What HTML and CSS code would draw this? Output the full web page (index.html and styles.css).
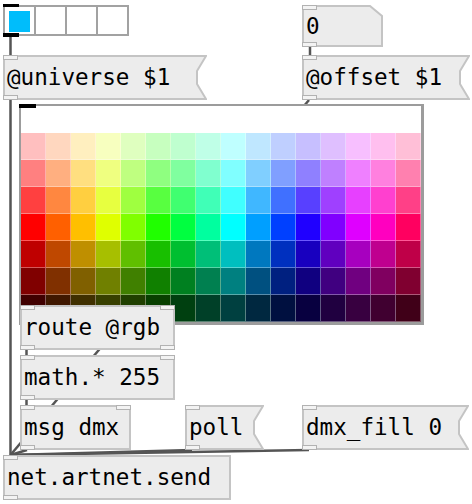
FILE: index.html
```html
<!DOCTYPE html>
<html>
<head>
<meta charset="utf-8">
<link rel="stylesheet" href="styles.css">
</head>
<body>
<div class="canvas">
  <svg class="cables" width="472" height="504" viewBox="0 0 472 504">
    <g stroke="#555" stroke-width="2.5" fill="none">
      <line x1="10.5" y1="36" x2="10.5" y2="55"/>
      <line x1="10.5" y1="100" x2="10.5" y2="455"/>
      <line x1="310" y1="47" x2="310" y2="55"/>
      <line x1="309" y1="100" x2="10.5" y2="455"/>
      <line x1="26.5" y1="350" x2="26.5" y2="355"/>
      <line x1="26.5" y1="400" x2="26.5" y2="405"/>
      <line x1="27" y1="450" x2="10.5" y2="455"/>
      <line x1="192" y1="450" x2="10.5" y2="455"/>
      <line x1="309" y1="450" x2="10.5" y2="455"/>
    </g>
  </svg>

  <div class="node hradio">
    <i class="hbar hbar-top"></i>
    <span class="cell"><span class="dot"></span></span>
    <span class="cell"></span>
    <span class="cell"></span>
    <span class="cell"></span>
    <i class="hbar hbar-bottom"></i>
  </div>

  <div class="node numbox">
    <svg class="shape" width="81" height="42"><polygon points="1,1 68,1 80,11 80,41 1,41"/></svg>
    <span class="nub tl0"></span><span class="nub bl0"></span>
    <span class="label">0</span>
  </div>

  <div class="node msg m-universe">
    <svg class="shape" width="204" height="45"><polygon points="1,1 203,1 194,16 194,29 203,44 1,44"/></svg>
    <span class="nub tl0"></span><span class="nub bl0"></span>
    <span class="label">@universe $1</span>
  </div>

  <div class="node msg m-offset">
    <svg class="shape" width="168" height="45"><polygon points="1,1 167,1 158,16 158,29 167,44 1,44"/></svg>
    <span class="nub tl0"></span><span class="nub bl0"></span>
    <span class="label">@offset $1</span>
  </div>

  <div class="node swatch">
    <i class="sbar"></i>
    <div class="srow"><i></i><i></i><i></i><i></i><i></i><i></i><i></i><i></i><i></i><i></i><i></i><i></i><i></i><i></i><i></i><i></i></div>
    <div class="srow"><i></i><i></i><i></i><i></i><i></i><i></i><i></i><i></i><i></i><i></i><i></i><i></i><i></i><i></i><i></i><i></i></div>
    <div class="srow"><i></i><i></i><i></i><i></i><i></i><i></i><i></i><i></i><i></i><i></i><i></i><i></i><i></i><i></i><i></i><i></i></div>
    <div class="srow"><i></i><i></i><i></i><i></i><i></i><i></i><i></i><i></i><i></i><i></i><i></i><i></i><i></i><i></i><i></i><i></i></div>
    <div class="srow"><i></i><i></i><i></i><i></i><i></i><i></i><i></i><i></i><i></i><i></i><i></i><i></i><i></i><i></i><i></i><i></i></div>
    <div class="srow"><i></i><i></i><i></i><i></i><i></i><i></i><i></i><i></i><i></i><i></i><i></i><i></i><i></i><i></i><i></i><i></i></div>
    <div class="srow"><i></i><i></i><i></i><i></i><i></i><i></i><i></i><i></i><i></i><i></i><i></i><i></i><i></i><i></i><i></i><i></i></div>
    <div class="srow"><i></i><i></i><i></i><i></i><i></i><i></i><i></i><i></i><i></i><i></i><i></i><i></i><i></i><i></i><i></i><i></i></div>
  </div>

  <div class="node obj o-route">
    <span class="nub tl"></span><span class="nub tr"></span><span class="nub bl"></span><span class="nub br"></span>
    route @rgb
  </div>

  <div class="node obj o-math">
    <span class="nub tl"></span><span class="nub tr"></span><span class="nub bl"></span>
    math.* 255
  </div>

  <div class="node obj o-msgdmx">
    <span class="nub tl"></span><span class="nub tr"></span><span class="nub bl"></span>
    msg dmx
  </div>

  <div class="node msg m-poll">
    <svg class="shape" width="79" height="45"><polygon points="1,1 78,1 69,16 69,29 78,44 1,44"/></svg>
    <span class="nub tl0"></span><span class="nub bl0"></span>
    <span class="label">poll</span>
  </div>

  <div class="node msg m-fill">
    <svg class="shape" width="167" height="45"><polygon points="1,1 166,1 157,16 157,29 166,44 1,44"/></svg>
    <span class="nub tl0"></span><span class="nub bl0"></span>
    <span class="label">dmx_fill 0</span>
  </div>

  <div class="node obj o-send">
    <span class="nub tl"></span><span class="nub bl"></span>
    net.artnet.send
  </div>
</div>
</body>
</html>
```

FILE: styles.css
```css
html, body {
  margin: 0;
  padding: 0;
  background: #ffffff;
}

.canvas {
  position: relative;
  width: 472px;
  height: 504px;
  overflow: hidden;
  font-family: "DejaVu Sans Mono", "Liberation Mono", monospace;
  font-size: 22.6px;
  color: #000;
}

.cables {
  position: absolute;
  left: 0;
  top: 0;
}

.node {
  position: absolute;
  box-sizing: border-box;
}

/* radio */
.hradio {
  left: 3px;
  top: 5px;
  width: 126px;
  height: 31px;
  border: 2px solid #a2a2a2;
  background: #fff;
  display: flex;
}
.cell {
  flex: 1;
  border-left: 2px solid #a2a2a2;
}
.cell:nth-of-type(1) {
  border-left: 0;
}
.dot {
  display: block;
  margin: 4px;
  width: 21px;
  height: 21px;
  background: #00bdfb;
}
.hbar {
  position: absolute;
  left: -2px;
  width: 16px;
  background: #000;
}
.hbar-top {
  top: -3px;
  height: 3px;
}
.hbar-bottom {
  top: 26px;
  height: 4px;
}

/* shapes */
.shape {
  position: absolute;
  left: 0;
  top: 0;
}
.shape polygon {
  fill: #ececec;
  stroke: #c4c4c4;
  stroke-width: 2;
}
.label {
  position: relative;
  display: block;
  padding-left: 4px;
  white-space: pre;
  line-height: 45px;
}

.numbox {
  left: 302px;
  top: 5px;
  width: 81px;
  height: 42px;
}
.numbox .label {
  line-height: 42px;
}

.msg {
  height: 45px;
}
.m-universe { left: 3px; top: 55px; width: 204px; }
.m-offset { left: 302px; top: 55px; width: 168px; }
.m-poll { left: 185px; top: 405px; width: 79px; }
.m-fill { left: 302px; top: 405px; width: 167px; }

/* nubs */
.nub {
  position: absolute;
  width: 15px;
  height: 5px;
  box-sizing: border-box;
  border: 1px solid #b2b2b2;
  background: #f3f3f3;
  z-index: 1;
}
.tl0 { left: 0; top: 0; }
.bl0 { left: 0; bottom: 0; }
.tl { left: -2px; top: -2px; }
.tr { right: -2px; top: -2px; }
.bl { left: -2px; bottom: -2px; }
.br { right: -2px; bottom: -2px; }

/* object boxes */
.obj {
  height: 45px;
  border: 2px solid #c4c4c4;
  background: #ececec;
  line-height: 41px;
  padding-left: 2px;
  white-space: nowrap;
}
.o-route { left: 20px; top: 305px; width: 155px; }
.o-math { left: 20px; top: 355px; width: 155px; }
.o-msgdmx { left: 20px; top: 405px; width: 111px; }
.o-send { left: 3px; top: 455px; width: 228px; }

/* colour swatch */
.swatch {
  left: 19px;
  top: 104px;
  border: 2px solid #9c9c9c;
  border-right-width: 3px;
  border-bottom-width: 3px;
  background: #fff;
}
.sbar {
  position: absolute;
  left: -2px;
  top: -2px;
  width: 17px;
  height: 4px;
  background: #000;
}
.srow {
  display: flex;
}
.srow i {
  display: block;
  width: 25px;
  height: 27px;
  box-sizing: border-box;
  border-right: 1px solid rgba(255, 255, 255, 0.35);
  border-bottom: 1px solid rgba(255, 255, 255, 0.35);
  background: hsl(var(--h), 100%, var(--l));
}
.srow:nth-of-type(1) { --l: 100%; }
.srow:nth-of-type(2) { --l: 87.5%; }
.srow:nth-of-type(3) { --l: 75%; }
.srow:nth-of-type(4) { --l: 62.5%; }
.srow:nth-of-type(5) { --l: 50%; }
.srow:nth-of-type(6) { --l: 37.5%; }
.srow:nth-of-type(7) { --l: 25%; }
.srow:nth-of-type(8) { --l: 12.5%; }

.srow i:nth-child(1) { --h: 0; }
.srow i:nth-child(2) { --h: 22.5; }
.srow i:nth-child(3) { --h: 45; }
.srow i:nth-child(4) { --h: 67.5; }
.srow i:nth-child(5) { --h: 90; }
.srow i:nth-child(6) { --h: 112.5; }
.srow i:nth-child(7) { --h: 135; }
.srow i:nth-child(8) { --h: 157.5; }
.srow i:nth-child(9) { --h: 180; }
.srow i:nth-child(10) { --h: 202.5; }
.srow i:nth-child(11) { --h: 225; }
.srow i:nth-child(12) { --h: 247.5; }
.srow i:nth-child(13) { --h: 270; }
.srow i:nth-child(14) { --h: 292.5; }
.srow i:nth-child(15) { --h: 315; }
.srow i:nth-child(16) { --h: 337.5; }
```
